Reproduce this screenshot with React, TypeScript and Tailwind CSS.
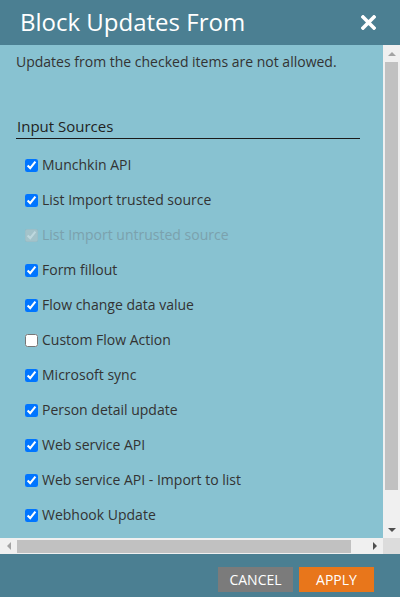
import React from "react";

type Source = { label: string; checked: boolean; disabled?: boolean };

const sources: Source[] = [
  { label: "Munchkin API", checked: true },
  { label: "List Import trusted source", checked: true },
  { label: "List Import untrusted source", checked: true, disabled: true },
  { label: "Form fillout", checked: true },
  { label: "Flow change data value", checked: true },
  { label: "Custom Flow Action", checked: false },
  { label: "Microsoft sync", checked: true },
  { label: "Person detail update", checked: true },
  { label: "Web service API", checked: true },
  { label: "Web service API - Import to list", checked: true },
  { label: "Webhook Update", checked: true },
];

const Arrow = ({ dir, dark }: { dir: "up" | "down" | "left" | "right"; dark?: boolean }) => {
  const pts = {
    up: "0,4 4,0 8,4",
    down: "0,0 8,0 4,4",
    left: "4,0 4,8 0,4",
    right: "0,0 4,4 0,8",
  }[dir];
  const vertical = dir === "up" || dir === "down";
  return (
    <svg width={vertical ? 8 : 4} height={vertical ? 4 : 8} viewBox={vertical ? "0 0 8 4" : "0 0 4 8"}>
      <polygon points={pts} fill={dark ? "#505050" : "#a3a3a3"} />
    </svg>
  );
};

const SourceRow: React.FC<Source> = ({ label, checked, disabled }) => {
  const [on, setOn] = React.useState(checked);
  return (
    <label className="flex items-center h-[20px] pl-[25px]">
      <input
        type="checkbox"
        checked={on}
        disabled={disabled}
        onChange={() => setOn(!on)}
        className={`m-0 w-[13px] h-[13px] accent-[#0075ff] ${disabled ? "opacity-60" : ""}`}
      />
      <span className={`ml-[4px] text-[14px] leading-[20px] whitespace-nowrap ${disabled ? "text-[#7ba1ad]" : "text-[#333333]"}`}>
        {label}
      </span>
    </label>
  );
};

export default function App() {
  return (
    <div className="w-[400px] h-[597px] flex flex-col bg-[#4b7f92] overflow-hidden" style={{ fontFamily: '"Open Sans", "Noto Sans", sans-serif' }}>
      {/* header */}
      <div className="h-[45px] flex items-center justify-between pl-[20px] pr-[24px] shrink-0">
        <h1 className="text-white text-[24px] leading-[30px] pb-[2px]">Block Updates From</h1>
        <svg width="15" height="15" viewBox="0 0 15 15">
          <path d="M2 2 L13 13 M13 2 L2 13" stroke="white" strokeWidth="3.6" strokeLinecap="square" />
        </svg>
      </div>

      {/* scroll area */}
      <div className="flex flex-col h-[509px] shrink-0">
        <div className="flex flex-1 min-h-0">
          <div className="flex-1 bg-[#88c2d1] overflow-hidden pt-[7px]">
            <p className="pl-[16px] text-[14px] leading-[19px] text-[#333333] whitespace-nowrap">
              Updates from the checked items are not allowed.
            </p>
            <div className="mt-[45px] ml-[16px] w-[344px] border-b border-[#1a1a1a] pb-[2px]">
              <h2 className="text-[15px] leading-[20px] text-[#222222] pl-[1px]">Input Sources</h2>
            </div>
            <div className="mt-[16px] flex flex-col gap-[15px]">
              {sources.map((s) => (
                <SourceRow key={s.label} {...s} />
              ))}
            </div>
          </div>
          {/* vertical scrollbar */}
          <div className="w-[17px] bg-[#f0f0f0] flex flex-col items-center">
            <div className="h-[17px] flex items-center justify-center"><Arrow dir="up" /></div>
            <div className="w-[13px] h-[428px] bg-[#c1c1c1]" />
            <div className="flex-1" />
            <div className="h-[17px] flex items-center justify-center"><Arrow dir="down" dark /></div>
          </div>
        </div>
        {/* horizontal scrollbar */}
        <div className="h-[16px] flex shrink-0">
          <div className="flex-1 bg-[#f0f0f0] flex items-center">
            <div className="w-[17px] flex justify-center"><Arrow dir="left" /></div>
            <div className="w-[334px] h-[13px] bg-[#c1c1c1]" />
            <div className="flex-1" />
            <div className="w-[17px] flex justify-center"><Arrow dir="right" dark /></div>
          </div>
          <div className="w-[17px] bg-[#dcdcdc]" />
        </div>
      </div>

      {/* footer */}
      <div className="flex-1 flex justify-end items-start pt-[13px] pr-[26px] gap-[6px]">
        <button className="w-[75px] h-[25px] bg-[#7b7b7b] text-white text-[14px] leading-[25px]">CANCEL</button>
        <button className="w-[75px] h-[25px] bg-[#e8761b] text-white text-[14px] leading-[25px]">APPLY</button>
      </div>
    </div>
  );
}
